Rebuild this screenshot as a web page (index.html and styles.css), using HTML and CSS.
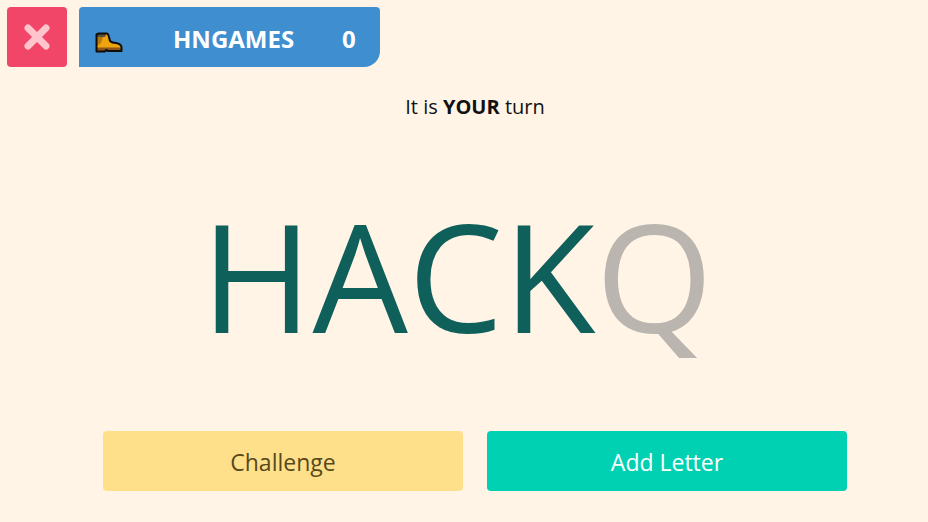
FILE: index.html
```html
<!DOCTYPE html>
<html lang="en">
<head>
<meta charset="utf-8">
<meta name="viewport" content="width=device-width, initial-scale=1">
<title>Word game</title>
<link rel="stylesheet" href="styles.css">
</head>
<body>
<header class="topbar">
  <button class="leave" type="button" aria-label="Leave game">
    <svg viewBox="0 0 26 26" aria-hidden="true"><path d="M4 4 22 22M22 4 4 22"/></svg>
  </button>
  <div class="player">
    <button class="kick" type="button" aria-label="Kick player">
      <svg viewBox="0 0 28 21" aria-hidden="true">
        <path d="M1.500 2.500Q2 1.500 4 1.500H12Q13.500 2 14 5L15 9Q17 11 21 11Q26 12 26.500 15V19H13L11 18 10 19.500H1.500Z" fill="#eca50d"/>
        <path d="M2 5H8L6 11 2 14Z" fill="#b9780d"/>
        <path d="M2 2H11L10 5H2Z" fill="#55513f"/>
        <path d="M2 15.500H26V19H13L11 18 10 19.500H2Z" fill="#8e561b"/>
        <path d="M1.500 2.500Q2 1.500 4 1.500H12Q13.500 2 14 5L15 9Q17 11 21 11Q26 12 26.500 15V19H13L11 18 10 19.500H1.500Z" fill="none" stroke="#100d08" stroke-width="2" stroke-linejoin="round"/>
      </svg>
    </button>
    <span class="name">HNGAMES</span>
    <span class="score">0</span>
  </div>
</header>
<main class="game">
  <p class="turn">It is <strong>YOUR</strong> turn</p>
  <h1 class="word">HACK<span class="pending">Q</span></h1>
  <div class="actions">
    <button class="action challenge" type="button">Challenge</button>
    <button class="action add" type="button">Add Letter</button>
  </div>
</main>
</body>
</html>
```
FILE: styles.css
```css
* { box-sizing: border-box; }
body {
  margin: 0;
  background: #fff4e5;
  color: #111;
  font-family: "Segoe UI", "Open Sans", "Noto Sans", sans-serif;
}
button { border: 0; font: inherit; cursor: pointer; }
.topbar { display: flex; gap: 12px; padding: 7px 7px 0; }
.leave {
  display: grid;
  place-items: center;
  width: 60px;
  height: 60px;
  padding: 0;
  border-radius: 4px;
  background: #f14668;
}
.leave svg { width: 26px; height: 26px; fill: none; stroke: #ffc4cc; stroke-width: 7; stroke-linecap: round; }
.player {
  display: flex;
  align-items: center;
  height: 60px;
  padding: 2px 24px 0 16px;
  border-radius: 4px 4px 16px 0;
  background: #3e8ed0;
  color: #fff;
  font-size: 24px;
  font-weight: 700;
}
.kick { display: block; margin: 8px 50px 0 0; padding: 0; background: none; }
.kick svg { display: block; width: 28px; height: 21px; }
.name { margin-right: 48px; }
.game { padding: 24px 0 24px 22px; text-align: center; }
.turn { margin: 0; font-size: 20px; line-height: 32px; }
.word {
  margin: 40px 36px 44px 0;
  color: #0f5f5b;
  font-size: 151px;
  font-weight: 400;
  line-height: 224px;
}
.pending { color: #bab5af; }
.actions { display: flex; gap: 24px; max-width: 744px; margin: 0 auto; }
.action { flex: 1; height: 60px; padding: 2px 16px 0; border-radius: 4px; font-size: 23px; }
.challenge { background: #ffe08a; color: #57491c; }
.add { background: #00d1b2; color: #fff; }
```
